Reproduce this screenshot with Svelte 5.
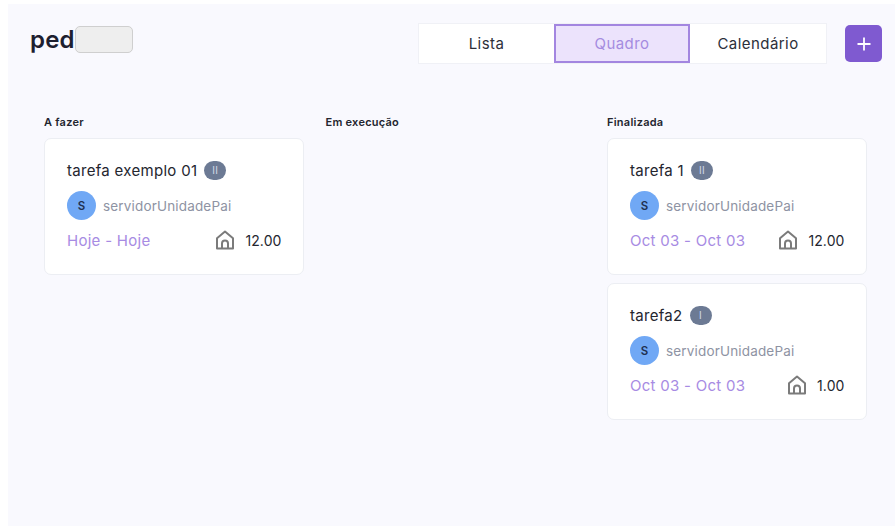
<script>
  const columns = [
    {
      title: "A fazer",
      cards: [
        { name: "tarefa exemplo 01", badge: "II", user: "servidorUnidadePai", dates: "Hoje - Hoje", hours: "12.00" }
      ]
    },
    { title: "Em execução", cards: [] },
    {
      title: "Finalizada",
      cards: [
        { name: "tarefa 1", badge: "II", user: "servidorUnidadePai", dates: "Oct 03 - Oct 03", hours: "12.00" },
        { name: "tarefa2", badge: "I", user: "servidorUnidadePai", dates: "Oct 03 - Oct 03", hours: "1.00" }
      ]
    }
  ];
  const views = ["Lista", "Quadro", "Calendário"];
  let active = "Quadro";
</script>

<div class="page">
  <header>
    <div class="brand">
      <span class="logo">ped</span>
      <span class="mask"></span>
    </div>
    <div class="actions">
      <div class="tabs">
        {#each views as view}
          <button class="tab" class:active={view == active}>{view}</button>
        {/each}
      </div>
      <button class="add" aria-label="Adicionar">
        <svg width="14" height="14" viewBox="0 0 14 14">
          <path d="M7 .5v13M.5 7h13" stroke="#fff" stroke-width="1.8" fill="none" />
        </svg>
      </button>
    </div>
  </header>

  <div class="board">
    {#each columns as col}
      <section>
        <h2>{col.title}</h2>
        {#each col.cards as card}
          <article class="card">
            <div class="title">
              <span>{card.name}</span>
              <span class="badge">{card.badge}</span>
            </div>
            <div class="user">
              <span class="avatar">S</span>
              <span>{card.user}</span>
            </div>
            <div class="meta">
              <span class="dates">{card.dates}</span>
              <span class="hours">
                <svg width="20" height="20" viewBox="0 0 20 20" fill="none" stroke="#7b7b7b" stroke-width="2" stroke-linejoin="round">
                  <path d="M2 18.5V8.2L10 1.6l8 6.6v10.3z" />
                  <path d="M7 18.5v-5a3 3 0 0 1 6 0v5" />
                </svg>
                {card.hours}
              </span>
            </div>
          </article>
        {/each}
      </section>
    {/each}
  </div>
</div>

<style>
  :global(body) {
    background: #fff;
    font-family: "Inter", "Liberation Sans", sans-serif;
  }
  .page {
    box-sizing: border-box;
    margin: 4px 0 0 8px;
    height: 522px;
    background: #f9f9fe;
    overflow: hidden;
  }
  header {
    display: flex;
    justify-content: space-between;
    align-items: center;
    padding: 19px 13px 0 22px;
  }
  .brand {
    display: flex;
    align-items: center;
    margin-top: -8px;
  }
  .logo {
    font-size: 24px;
    font-weight: 600;
    letter-spacing: 0.2px;
    color: #1d2030;
  }
  .mask {
    width: 56px;
    height: 25px;
    background: #eeeeee;
    border: 1px solid #cfcfcf;
    border-radius: 5px;
  }
  .actions {
    display: flex;
    align-items: center;
    gap: 18px;
  }
  .tabs {
    display: flex;
    background: #fff;
    border: 1px solid #f0f1f6;
  }
  .tab {
    width: 136px;
    height: 39px;
    padding: 0;
    background: none;
    border: 0;
    font: 400 15px "Inter", sans-serif;
    letter-spacing: 0.45px;
    color: #2c2f3a;
  }
  .tab:first-child {
    width: 135px;
  }
  .tab.active {
    background: #ece3fc;
    border: 2px solid #a386e0;
    color: #a58ce0;
  }
  .add {
    width: 37px;
    height: 37px;
    display: flex;
    align-items: center;
    justify-content: center;
    padding: 0;
    background: #7f5ad0;
    border: 0;
    border-radius: 5px;
  }
  .board {
    display: grid;
    grid-template-columns: repeat(3, 259.5px);
    gap: 22px;
    padding: 50px 0 0 36px;
  }
  h2 {
    margin: 0 0 8px;
    font-size: 11px;
    line-height: 16px;
    font-weight: 600;
    letter-spacing: 0.25px;
    color: #23252f;
  }
  .card {
    box-sizing: border-box;
    height: 137px;
    margin-bottom: 8px;
    padding: 21px 21px 0 22px;
    background: #fff;
    border: 1px solid #eceef3;
    border-radius: 7px;
  }
  .title {
    display: flex;
    align-items: center;
    gap: 7px;
    height: 20px;
    font-size: 15px;
    letter-spacing: 0.3px;
    color: #24262f;
  }
  .badge {
    display: flex;
    align-items: center;
    justify-content: center;
    width: 22px;
    height: 19px;
    border-radius: 10px;
    background: #6c7a94;
    color: #d5dbe6;
    font-size: 10px;
  }
  .user {
    display: flex;
    align-items: center;
    gap: 7px;
    margin-top: 11px;
    font-size: 13.5px;
    letter-spacing: 0.17px;
    color: #8e93a3;
  }
  .avatar {
    display: flex;
    align-items: center;
    justify-content: center;
    width: 29px;
    height: 29px;
    border-radius: 50%;
    background: #70a8f5;
    color: #1f3050;
    font-size: 11.5px;
    font-weight: 600;
  }
  .meta {
    display: flex;
    align-items: center;
    justify-content: space-between;
    margin-top: 8px;
    height: 24px;
  }
  .dates {
    font-size: 15px;
    letter-spacing: 0.28px;
    color: #a78be3;
  }
  .hours {
    display: flex;
    align-items: center;
    gap: 10px;
    font-size: 14px;
    letter-spacing: 0.1px;
    color: #24262f;
  }
</style>
